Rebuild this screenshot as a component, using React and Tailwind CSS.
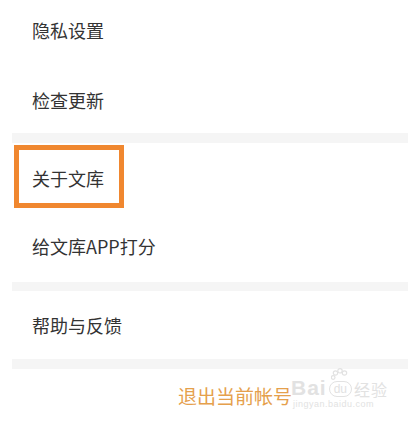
import React from 'react'

const font = { fontFamily: '"Noto Sans CJK SC", "Noto Sans", sans-serif' }

function Row({ label, className = '', children }) {
    return (
        <div className={`relative pl-8 text-[18px] leading-[18px] text-[#333333] ${className}`}>
            {children}
            <span className="relative">{label}</span>
        </div>
    )
}

function Band({ h }) {
    return <div className={`ml-3 bg-[#f5f5f5] ${h}`} />
}

export default function App() {
    return (
        <div className="relative w-[408px] h-[422px] overflow-hidden bg-white" style={font}>
            <Row label="隐私设置" className="h-[66px] pt-[21px]" />
            <Row label="检查更新" className="h-[67px] pt-[25px]" />
            <Band h="h-[10px]" />

            <Row label="关于文库" className="h-[69px] pt-[26px]">
                {/* annotation box */}
                <div className="absolute left-[14px] top-[2px] w-[110px] h-[63px] border-[5px] border-[#f0872f]" />
            </Row>
            <Row label="给文库APP打分" className="h-[70px] pt-[25px]" />
            <Band h="h-[9px]" />

            <Row label="帮助与反馈" className="h-[68px] pt-[25px]" />
            <Band h="h-[10px]" />

            <div className="flex justify-center pl-[62px] pt-[17px] text-[19px] leading-[19px] text-[#e5a04c]">
                退出当前帐号
            </div>

            {/* watermark */}
            <div className="absolute left-[291px] top-[368px] text-[#e2e2e2]">
                <div className="flex items-end gap-[2px]">
                    <span className="text-[21px] leading-[19px] font-bold tracking-[1px]" style={{ fontFamily: '"Liberation Sans", sans-serif' }}>Bai</span>
                    <div className="relative flex flex-col items-center">
                        <svg width="18" height="13" viewBox="0 0 18 13" fill="none" stroke="#e2e2e2" strokeWidth="1.2">
                            <circle cx="4.5" cy="5" r="2.2" />
                            <circle cx="9" cy="2.8" r="2.2" />
                            <circle cx="13.5" cy="5" r="2.2" />
                            <circle cx="2.2" cy="9.5" r="1.8" />
                        </svg>
                        <span className="px-[4px] rounded-full border border-[#e2e2e2] text-[12px] leading-[14px]" style={{ fontFamily: '"Liberation Sans", sans-serif' }}>du</span>
                    </div>
                    <span className="text-[16px] leading-[16px] tracking-[1px]">经验</span>
                </div>
                <div className="text-[9px] leading-[10px] mt-[2px] pl-[2px] tracking-[0.5px]" style={{ fontFamily: '"Liberation Sans", sans-serif' }}>jingyan.baidu.com</div>
            </div>
        </div>
    )
}
